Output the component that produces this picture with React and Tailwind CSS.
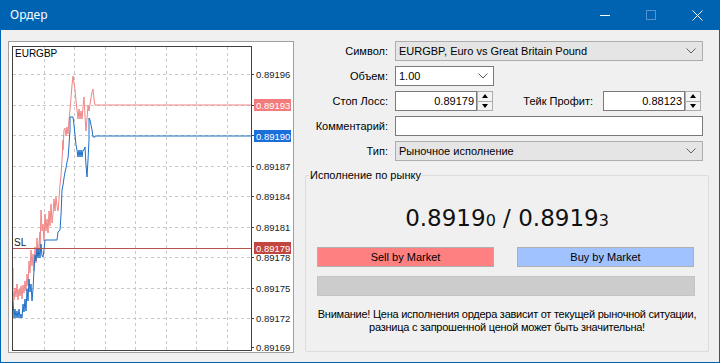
import React from "react";

// tick data for the chart (page coordinates)
const ASK =
  "13,268 13,290 14,300 15,288 16,297 17,284 18,300 19,289 20,296 21,286 22,299 23,285 24,293 25,281 26,291 27,274 28,286 29,261 30,273 31,250 32,266 33,254 34,271 35,247 36,263 37,238 38,256 39,244 40,232 40,250 41,210 42,231 43,224 44,241 45,214 46,231 47,219 48,233 49,211 50,226 51,204 52,223 53,214 54,199 55,211 56,197 57,206 58,211 59,199 60,185 61,175 62,160 63,140 63,150 64,130 65,128 66,136 67,127 68,134 69,120 70,110 71,98 72,85 73,76 74,83 75,90 76,101 77,110 78,119 79,109 80,119 81,111 82,119 83,107 84,97 85,116 86,131 87,119 88,105 89,111 90,104 91,98 92,92 93,89 94,99 95,105 251,105";
const BID =
  "13,300 14,318 15,309 16,318 17,311 18,318 19,309 20,318 21,314 22,318 23,304 24,312 25,299 26,311 27,289 28,301 29,279 30,292 31,284 32,301 33,289 34,270 35,255 36,261 37,249 38,258 39,249 40,258 41,244 42,256 43,257 44,250 45,240 46,240 57,240 58,232 60,230 61,215 62,190 63,185 64,178 65,172 66,168 67,162 68,158 69,145 70,130 70,117 73,117 74,125 75,135 76,145 77,150 78,157 79,150 80,157 81,150 82,157 83,150 84,150 85,147 86,165 87,177 88,160 89,140 89,118 90,120 91,125 92,130 93,137 95,137 95,136 251,136";

const gridX = [44, 74, 105, 135, 166, 196, 227];
const levels = [
  [74, "0.89196"],
  [105, "0.89193"],
  [135, "0.89190"],
  [166, "0.89187"],
  [196, "0.89184"],
  [227, "0.89181"],
  [257, "0.89178"],
  [288, "0.89175"],
  [318, "0.89172"],
  [347, "0.89169"],
];

function Chevron() {
  return (
    <svg width="10" height="6" viewBox="0 0 10 6">
      <polyline points="0.5,0.5 5,5 9.5,0.5" fill="none" stroke="#606060" strokeWidth="1" />
    </svg>
  );
}

function Spin() {
  return (
    <div className="w-[16px] h-full flex flex-col border border-[#adadad] bg-[#f3f3f3]">
      <div className="flex-1 flex items-center justify-center border-b border-[#adadad]">
        <svg width="6" height="4" viewBox="0 0 6 4"><polygon points="0,4 3,0 6,4" fill="#000" /></svg>
      </div>
      <div className="flex-1 flex items-center justify-center">
        <svg width="6" height="4" viewBox="0 0 6 4"><polygon points="0,0 6,0 3,4" fill="#000" /></svg>
      </div>
    </div>
  );
}

function Chart() {
  return (
    <div className="w-[286px] h-[312px] border border-[#a0a0a0] bg-white">
      <svg width="284" height="310" viewBox="9 42 284 310" style={{ fontFamily: "'Liberation Sans', sans-serif" }}>
        {gridX.map((x) => (
          <line key={x} x1={x + 0.5} y1="47" x2={x + 0.5} y2="350" stroke="#c8c8c8" strokeDasharray="3,3" />
        ))}
        {levels.slice(0, 9).map(([y]) => (
          <line key={y} x1="13" y1={y + 0.5} x2="251" y2={y + 0.5} stroke="#c8c8c8" strokeDasharray="3,3" />
        ))}
        {levels.map(([y, t]) => (
          <g key={t}>
            <line x1="251" y1={y + 0.5} x2="254" y2={y + 0.5} stroke="#404040" />
            <text x="256" y={y + 4} fontSize="9.5" fill="#1a1a1a">{t}</text>
          </g>
        ))}
        <polyline points={ASK} fill="none" stroke="#f08585" strokeWidth="1" />
        <polyline points={BID} fill="none" stroke="#1f6fc8" strokeWidth="1" />
        <line x1="13" y1="248.5" x2="251" y2="248.5" stroke="#b85450" />
        <text x="14" y="246" fontSize="10" fill="#202020">SL</text>
        <text x="15" y="57" fontSize="10" fill="#000">EURGBP</text>
        <rect x="12.5" y="46.5" width="239" height="304" fill="none" stroke="#404040" />

        <rect x="254" y="99" width="37" height="12" fill="#f27b7b" />
        <text x="256" y="109" fontSize="9.5" fill="#fff">0.89193</text>
        <rect x="254" y="130" width="37" height="12" fill="#1a6fdb" />
        <text x="256" y="140" fontSize="9.5" fill="#fff">0.89190</text>
        <rect x="254" y="242" width="37" height="12" fill="#c2453f" />
        <text x="256" y="252" fontSize="9.5" fill="#fff">0.89179</text>
      </svg>
    </div>
  );
}

export default function App() {
  return (
    <div
      className="w-[720px] h-[363px] flex flex-col bg-[#0063b1] text-[11px] text-black"
      style={{ fontFamily: "'Liberation Sans', Arial, sans-serif" }}
    >
      {/* title bar */}
      <div className="h-[30px] flex items-center text-white">
        <span className="pl-[10px] text-[12px] font-['Noto_Sans',sans-serif]">Ордер</span>
        <div className="ml-auto flex items-center h-full">
          <div className="w-[46px] h-full flex items-center justify-center">
            <svg width="10" height="10" viewBox="0 0 10 10"><line x1="0" y1="5.5" x2="10" y2="5.5" stroke="#fff" /></svg>
          </div>
          <div className="w-[46px] h-full flex items-center justify-center">
            <svg width="10" height="10" viewBox="0 0 10 10"><rect x="0.5" y="0.5" width="9" height="9" fill="none" stroke="#5792cf" /></svg>
          </div>
          <div className="w-[46px] h-full flex items-center justify-center">
            <svg width="11" height="11" viewBox="0 0 11 11">
              <line x1="0.5" y1="0.5" x2="10.5" y2="10.5" stroke="#fff" />
              <line x1="10.5" y1="0.5" x2="0.5" y2="10.5" stroke="#fff" />
            </svg>
          </div>
        </div>
      </div>

      {/* body */}
      <div className="flex-1 mx-[1px] mb-[1px] bg-[#f0f0f0] flex pl-[7px] pt-[11px]">
        <Chart />

        <div className="ml-[6px] w-[410px] flex flex-col">
          <div className="flex flex-col gap-[5px]">
            <div className="flex items-center h-[20px]">
              <span className="w-[88px] text-right">Символ:</span>
              <div className="ml-[7px] w-[308px] h-full flex items-center justify-between pl-[3px] pr-[6px] bg-[#e5e5e5] border border-[#adadad]">
                <span>EURGBP, Euro vs Great Britain Pound</span>
                <Chevron />
              </div>
            </div>
            <div className="flex items-center h-[20px]">
              <span className="w-[88px] text-right">Объем:</span>
              <div className="ml-[7px] w-[99px] h-full flex items-center justify-between pl-[3px] pr-[5px] bg-white border border-[#7a7a7a]">
                <span>1.00</span>
                <Chevron />
              </div>
            </div>
            <div className="flex items-center h-[20px]">
              <span className="w-[88px] text-right">Стоп Лосс:</span>
              <div className="ml-[7px] w-[82px] h-full flex items-center justify-end pr-[2px] bg-white border border-[#7a7a7a]">0.89179</div>
              <Spin />
              <span className="w-[100px] text-right">Тейк Профит:</span>
              <div className="ml-[10px] w-[82px] h-full flex items-center justify-end pr-[2px] bg-white border border-[#7a7a7a]">0.88123</div>
              <Spin />
            </div>
            <div className="flex items-center h-[20px]">
              <span className="w-[88px] text-right">Комментарий:</span>
              <div className="ml-[7px] w-[308px] h-full bg-white border border-[#7a7a7a]"></div>
            </div>
            <div className="flex items-center h-[20px]">
              <span className="w-[88px] text-right">Тип:</span>
              <div className="ml-[7px] w-[308px] h-full flex items-center justify-between pl-[3px] pr-[6px] bg-[#e5e5e5] border border-[#adadad]">
                <span>Рыночное исполнение</span>
                <Chevron />
              </div>
            </div>
          </div>

          {/* group box */}
          <div className="relative mt-[14px] ml-[5px] w-[404px] h-[177px] border border-[#dcdcdc] rounded-[2px] flex flex-col items-center">
            <span className="absolute -top-[8px] left-[3px] px-[1px] bg-[#f0f0f0] leading-[14px]">Исполнение по рынку</span>
            <div className="mt-[25px] h-[30px] flex items-baseline font-['DejaVu_Sans',sans-serif] text-[#111]">
              <span className="text-[23px]">0.8919</span>
              <span className="text-[16px]">0</span>
              <span className="text-[23px]">&nbsp;/&nbsp;0.8919</span>
              <span className="text-[16px]">3</span>
            </div>
            <div className="mt-[16px] w-full pl-[11px] pr-[14px] flex justify-between">
              <div className="w-[177px] h-[20px] flex items-center justify-center bg-[#ff8080] border border-[#b0b0b0]">Sell by Market</div>
              <div className="w-[177px] h-[20px] flex items-center justify-center bg-[#a0c3ff] border border-[#b0b0b0]">Buy by Market</div>
            </div>
            <div className="mt-[9px] w-[378px] h-[20px] ml-[-3px] bg-[#cccccc] border border-[#c4c4c4]"></div>
            <div className="mt-[12px] text-center leading-[13px] tracking-[-0.25px]">
              Внимание! Цена исполнения ордера зависит от текущей рыночной ситуации,
              <br />
              разница с запрошенной ценой может быть значительна!
            </div>
          </div>
        </div>
      </div>
    </div>
  );
}
